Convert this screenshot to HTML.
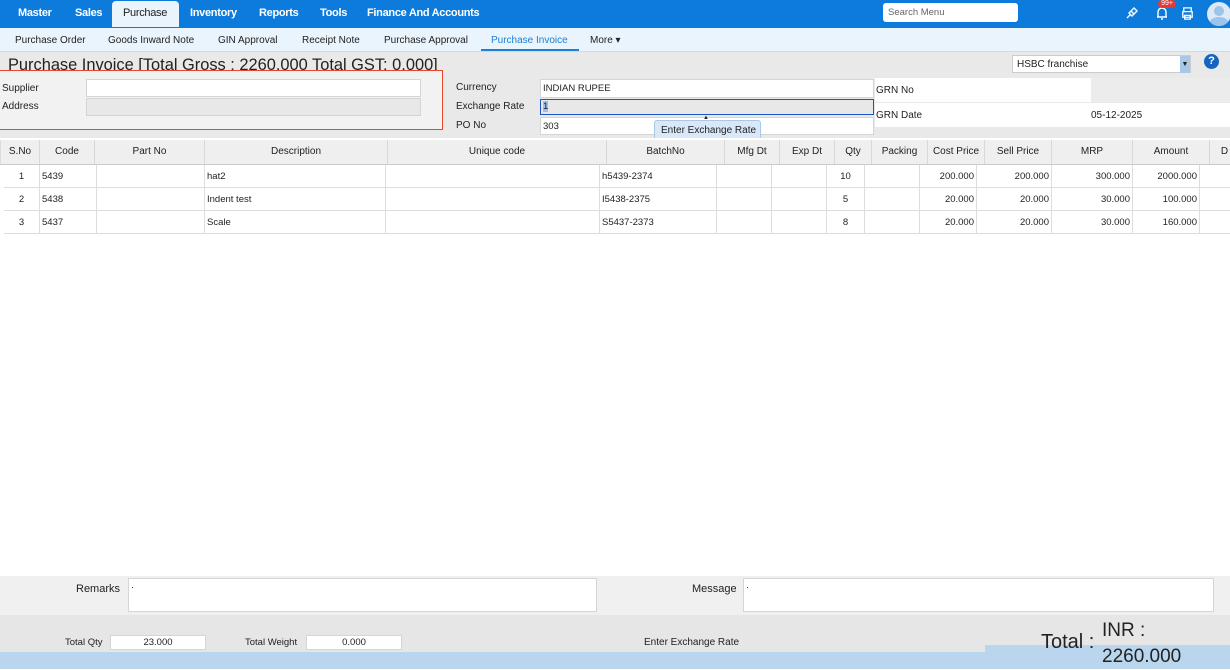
<!DOCTYPE html><html><head><style>
*{box-sizing:border-box;margin:0;padding:0}
body{width:1230px;height:669px;overflow:hidden;position:relative;background:#fff;font-family:"Liberation Sans",sans-serif;font-size:10px;color:#222}
.a{position:absolute}
.nav{left:0;top:0;width:1230px;height:28px;background:#0c7bdc}
.nav span{position:absolute;top:7px;color:#fff;font-weight:bold;font-size:11px;letter-spacing:-0.3px}
.sub{left:0;top:28px;width:1230px;height:24px;background:#eaf4fc;border-bottom:1px solid #cfdbe6}
.sub span{position:absolute;top:7px;font-size:10px;color:#222}
.inp{position:absolute;background:#fff;border:1px solid #d5d5d5;font-size:9.5px;padding:3px 2px}
.th{position:absolute;top:140px;height:24px;background:#efefef;border-right:1px solid #d8d8d8;text-align:center;line-height:24px;font-size:10px}
.td{position:absolute;height:23px;border-right:1px solid #ddd;border-bottom:1px solid #ddd;line-height:23px;font-size:9.5px;padding:0 2px}
.r{text-align:right}.c{text-align:center}
</style></head><body>
<div class="a nav">
<span style="left:18px">Master</span><span style="left:75px">Sales</span>
<div class="a" style="left:112px;top:1px;width:67px;height:26px;background:#eaf4fc;border-radius:4px 4px 0 0"></div>
<span style="left:123px;color:#222;font-weight:normal">Purchase</span>
<span style="left:190px">Inventory</span><span style="left:259px">Reports</span><span style="left:320px">Tools</span><span style="left:367px">Finance And Accounts</span>
<div class="a" style="left:883px;top:3px;width:135px;height:19px;background:#fff;border-radius:3px;color:#666;font-weight:normal;font-size:9.5px;padding:4px 5px">Search Menu</div>
<svg class="a" style="left:1124px;top:5px" width="16" height="16" viewBox="0 0 16 16"><path d="M3 13l3-3M5 8l5-5 3 3-5 5zM7 6l3 3" stroke="#fff" stroke-width="1.4" fill="none"/></svg>
<svg class="a" style="left:1154px;top:5px" width="16" height="16" viewBox="0 0 16 16"><path d="M4 12V7a4 4 0 018 0v5zM3 12h10M7 14h2" stroke="#fff" stroke-width="1.4" fill="none"/></svg>
<div class="a" style="left:1158px;top:0;width:18px;height:8px;background:#e53935;border-radius:4px;color:#fff;font-size:7px;text-align:center;line-height:8px">99+</div>
<svg class="a" style="left:1180px;top:6px" width="15" height="15" viewBox="0 0 16 16"><path d="M4 6V2h8v4M3 6h10v6H3zM5 10h6v4H5z" stroke="#fff" stroke-width="1.4" fill="none"/></svg>
<div class="a" style="left:1207px;top:2px;width:24px;height:24px;border-radius:50%;background:#dce9f6;overflow:hidden"><div class="a" style="left:7px;top:4px;width:10px;height:10px;border-radius:50%;background:#9cc3e8"></div><div class="a" style="left:2px;top:15px;width:20px;height:14px;border-radius:50%;background:#9cc3e8"></div></div>
</div>
<div class="a sub">
<span style="left:15px">Purchase Order</span><span style="left:108px">Goods Inward Note</span><span style="left:218px">GIN Approval</span><span style="left:302px">Receipt Note</span><span style="left:384px">Purchase Approval</span><span style="left:491px;color:#1a7fd6">Purchase Invoice</span><span style="left:590px">More ▾</span>
<div class="a" style="left:481px;top:21px;width:98px;height:2px;background:#1a7fd6"></div>
</div>
<div class="a" style="left:0;top:52px;width:1230px;height:86px;background:#e9e9e9"></div>
<div class="a" style="left:8px;top:56px;font-size:16.4px;color:#222">Purchase Invoice [Total Gross : 2260.000 Total GST: 0.000]</div>
<div class="a" style="left:1012px;top:55px;width:179px;height:18px;background:#fff;border:1px solid #ccc;font-size:10px;padding:3px 4px">HSBC franchise</div>
<div class="a" style="left:1180px;top:56px;width:10px;height:17px;background:#a9c8e8;font-size:7px;text-align:center;line-height:17px">▼</div>
<div class="a" style="left:1204px;top:54px;width:15px;height:15px;border-radius:50%;background:#1565c0;color:#fff;font-weight:bold;font-size:11px;text-align:center;line-height:15px">?</div>
<div class="a" style="left:0;top:70px;width:443px;height:60px;background:#f2f2f2;border:1px solid #e8472c;border-left:none"></div>
<div class="a" style="left:2px;top:83px">Supplier</div><div class="a" style="left:2px;top:101px">Address</div>
<div class="inp" style="left:86px;top:79px;width:335px;height:18px"></div>
<div class="inp" style="left:86px;top:98px;width:335px;height:18px;background:#e8e8e8"></div>
<div class="a" style="left:456px;top:82px">Currency</div><div class="a" style="left:456px;top:101px">Exchange Rate</div><div class="a" style="left:456px;top:120px">PO No</div>
<div class="inp" style="left:540px;top:79px;width:334px;height:19px">INDIAN RUPEE</div>
<div class="inp" style="left:540px;top:99px;width:334px;height:16px;background:#e8e8e8;border:1.5px solid #1a56c8;padding:1px 2px"><span style="background:#9cc0f0">1</span></div>
<div class="inp" style="left:540px;top:117px;width:334px;height:18px">303</div>
<div class="a" style="left:654px;top:120px;width:107px;height:20px;background:#d8e8f8;border:1px solid #a9c8e8;border-radius:3px;font-size:10px;padding:4px 6px;white-space:nowrap">Enter Exchange Rate</div>
<div class="a" style="left:703px;top:115px;font-size:6px">▲</div>
<div class="a" style="left:875px;top:78px;width:216px;height:24px;background:#fff;padding:7px 1px;font-size:10px">GRN No</div>
<div class="a" style="left:875px;top:103px;width:355px;height:24px;background:#fff;padding:7px 1px;font-size:10px">GRN Date<span class="a" style="left:216px;top:7px">05-12-2025</span></div>
<div class="a" style="left:1091px;top:78px;width:139px;height:24px;background:#ececec"></div>
<div class="a" style="left:0;top:138px;width:1230px;height:2px;background:#fff"></div>
<div class="th" style="left:0;width:40px;border-left:1px solid #ddd">S.No</div>
<div class="th" style="left:40px;width:55px">Code</div>
<div class="th" style="left:95px;width:110px">Part No</div>
<div class="th" style="left:205px;width:183px">Description</div>
<div class="th" style="left:388px;width:219px">Unique code</div>
<div class="th" style="left:607px;width:118px">BatchNo</div>
<div class="th" style="left:725px;width:55px">Mfg Dt</div>
<div class="th" style="left:780px;width:55px">Exp Dt</div>
<div class="th" style="left:835px;width:37px">Qty</div>
<div class="th" style="left:872px;width:56px">Packing</div>
<div class="th" style="left:928px;width:57px">Cost Price</div>
<div class="th" style="left:985px;width:67px">Sell Price</div>
<div class="th" style="left:1052px;width:81px">MRP</div>
<div class="th" style="left:1133px;width:77px">Amount</div>
<div class="th" style="left:1210px;width:30px">D</div>
<div class="a" style="left:0;top:164px;width:1230px;height:1px;background:#ccc"></div>
<div style="position:absolute;left:0;top:165px">
<div style="position:relative;height:23px">
<div class="td c" style="left:4px;width:36px">1</div><div class="td" style="left:40px;width:57px">5439</div><div class="td" style="left:97px;width:108px"></div><div class="td" style="left:205px;width:181px">hat2</div><div class="td" style="left:386px;width:214px"></div><div class="td" style="left:600px;width:117px">h5439-2374</div><div class="td" style="left:717px;width:55px"></div><div class="td" style="left:772px;width:55px"></div><div class="td c" style="left:827px;width:38px">10</div><div class="td" style="left:865px;width:55px"></div><div class="td r" style="left:920px;width:57px">200.000</div><div class="td r" style="left:977px;width:75px">200.000</div><div class="td r" style="left:1052px;width:81px">300.000</div><div class="td r" style="left:1133px;width:67px">2000.000</div><div class="td" style="left:1200px;width:30px;border-right:none"></div></div>
<div style="position:relative;height:23px">
<div class="td c" style="left:4px;width:36px">2</div><div class="td" style="left:40px;width:57px">5438</div><div class="td" style="left:97px;width:108px"></div><div class="td" style="left:205px;width:181px">Indent test</div><div class="td" style="left:386px;width:214px"></div><div class="td" style="left:600px;width:117px">I5438-2375</div><div class="td" style="left:717px;width:55px"></div><div class="td" style="left:772px;width:55px"></div><div class="td c" style="left:827px;width:38px">5</div><div class="td" style="left:865px;width:55px"></div><div class="td r" style="left:920px;width:57px">20.000</div><div class="td r" style="left:977px;width:75px">20.000</div><div class="td r" style="left:1052px;width:81px">30.000</div><div class="td r" style="left:1133px;width:67px">100.000</div><div class="td" style="left:1200px;width:30px;border-right:none"></div></div>
<div style="position:relative;height:23px">
<div class="td c" style="left:4px;width:36px">3</div><div class="td" style="left:40px;width:57px">5437</div><div class="td" style="left:97px;width:108px"></div><div class="td" style="left:205px;width:181px">Scale</div><div class="td" style="left:386px;width:214px"></div><div class="td" style="left:600px;width:117px">S5437-2373</div><div class="td" style="left:717px;width:55px"></div><div class="td" style="left:772px;width:55px"></div><div class="td c" style="left:827px;width:38px">8</div><div class="td" style="left:865px;width:55px"></div><div class="td r" style="left:920px;width:57px">20.000</div><div class="td r" style="left:977px;width:75px">20.000</div><div class="td r" style="left:1052px;width:81px">30.000</div><div class="td r" style="left:1133px;width:67px">160.000</div><div class="td" style="left:1200px;width:30px;border-right:none"></div></div>
</div>
<div class="a" style="left:0;top:576px;width:1230px;height:39px;background:#f0f0f0"></div>
<div class="a" style="left:76px;top:583px;font-size:11px">Remarks</div>
<div class="inp" style="left:128px;top:578px;width:469px;height:34px">·</div>
<div class="a" style="left:692px;top:583px;font-size:11px">Message</div>
<div class="inp" style="left:743px;top:578px;width:471px;height:34px">·</div>
<div class="a" style="left:0;top:615px;width:1230px;height:37px;background:#e6e6e6"></div>
<div class="a" style="left:0;top:652px;width:1230px;height:17px;background:#b9d6ee"></div>
<div class="a" style="left:985px;top:645px;width:245px;height:8px;background:#b9d6ee"></div>
<div class="a" style="left:65px;top:637px;font-size:9.5px">Total Qty</div>
<div class="inp" style="left:110px;top:635px;width:96px;height:15px;text-align:center;padding:1px">23.000</div>
<div class="a" style="left:245px;top:637px;font-size:9.5px">Total Weight</div>
<div class="inp" style="left:306px;top:635px;width:96px;height:15px;text-align:center;padding:1px">0.000</div>
<div class="a" style="left:644px;top:637px;font-size:10px">Enter Exchange Rate</div>
<div class="a" style="left:1041px;top:631px;font-size:20px">Total :</div>
<div class="a" style="left:1102px;top:618px;font-size:19px;line-height:26px">INR :<br>2260.000</div>
</body></html>
